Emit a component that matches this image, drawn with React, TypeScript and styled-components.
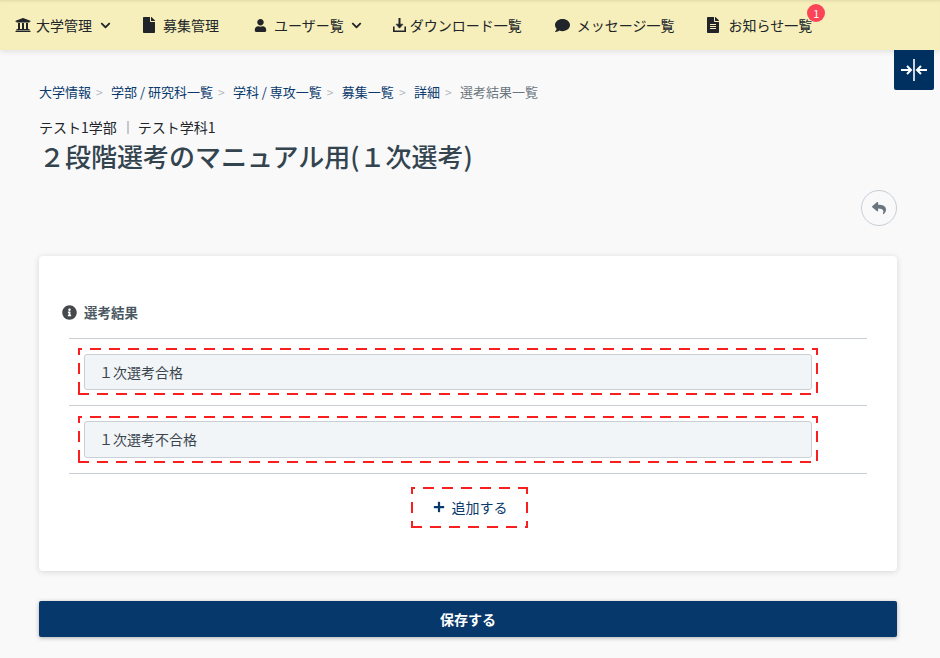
import React from 'react';
import styled, { createGlobalStyle, css } from 'styled-components';
import {
	FaChevronDown,
	FaComment,
	FaFile,
	FaFileAlt,
	FaInfoCircle,
	FaPlus,
	FaReply,
	FaUniversity,
	FaUser,
} from 'react-icons/fa';

const dashRed = '#f91f1f';

// Long dashes, which a plain `border: dashed` can't give.
const dashedOutline = css`
	background-image:
		linear-gradient(90deg, ${dashRed} 11px, transparent 11px),
		linear-gradient(90deg, ${dashRed} 11px, transparent 11px),
		linear-gradient(180deg, ${dashRed} 11px, transparent 11px),
		linear-gradient(180deg, ${dashRed} 11px, transparent 11px);
	background-size: 19px 2px, 19px 2px, 2px 19px, 2px 19px;
	background-position: -7px 0, 0 100%, 0 -4px, 100% -4px;
	background-repeat: repeat-x, repeat-x, repeat-y, repeat-y;
`;

const GlobalStyle = createGlobalStyle`
	html, body {
		margin: 0;
		padding: 0;
		background-color: #f9f9fa;
		font-family: "Noto Sans CJK JP", "Noto Sans", sans-serif;
	}
	* {
		box-sizing: border-box;
	}
`;

const Root = styled.div`
	position: relative;
	width: 940px;
	height: 658px;
	overflow: hidden;
`;

const Navbar = styled.nav`
	height: 50px;
	display: flex;
	align-items: center;
	padding: 0 0 0 15px;
	background-color: #f6efbb;
	box-shadow: 0 1px 6px rgba(0, 0, 0, 0.12), inset 0 3px 3px -2px rgba(0, 0, 0, 0.1);
	color: #212529;
	font-size: 14px;
`;

const NavItem = styled.div<{ $left?: number }>`
	position: relative;
	display: flex;
	align-items: center;
	margin-left: ${props => props.$left ?? 0}px;
	white-space: nowrap;
	svg {
		flex-shrink: 0;
	}
`;

const NavLabel = styled.span<{ $left: number; $right?: number }>`
	margin: 0 ${props => props.$right ?? 0}px 0 ${props => props.$left}px;
`;

const Badge = styled.span`
	position: absolute;
	top: -11px;
	right: -13px;
	width: 18px;
	height: 18px;
	border-radius: 50%;
	background-color: #fb4556;
	color: white;
	font-size: 11px;
	line-height: 18px;
	text-align: center;
`;

const CollapseToggle = styled.div`
	position: absolute;
	top: 50px;
	right: 6px;
	width: 40px;
	height: 40px;
	display: flex;
	align-items: center;
	justify-content: center;
	background-color: #00305f;
	border-radius: 0 0 2px 2px;
`;

const Main = styled.main`
	padding: 33px 43px 0 39px;
`;

const Breadcrumb = styled.div`
	display: flex;
	align-items: center;
	height: 16px;
	font-size: 13px;
	color: #0a3a6c;
`;

const Crumb = styled.span<{ $current?: boolean }>`
	color: ${props => (props.$current ? '#6c757d' : '#0a3a6c')};
`;

const CrumbSeparator = styled.span`
	width: 20px;
	padding-left: 5px;
	font-size: 12px;
	color: #b4bac0;
`;

const SubTitle = styled.div`
	display: flex;
	align-items: center;
	margin-top: 20px;
	height: 16px;
	font-size: 14px;
	color: #212529;
`;

const Divider = styled.span`
	width: 2px;
	height: 13px;
	margin: 0 9px 0 10px;
	background-color: #c4c8cc;
`;

const Title = styled.h1`
	margin: 4px 0 0;
	height: 34px;
	font-size: 26px;
	line-height: 34px;
	font-weight: 500;
	color: #33444f;
	white-space: nowrap;
`;

const ActionRow = styled.div`
	display: flex;
	justify-content: flex-end;
	margin-top: 17px;
`;

const BackButton = styled.div`
	width: 36px;
	height: 36px;
	display: flex;
	align-items: center;
	justify-content: center;
	border: 1px solid #c5ced6;
	border-radius: 50%;
	color: #69757f;
`;

const Card = styled.section`
	margin-top: 30px;
	height: 315px;
	padding: 47px 30px 0 23px;
	background-color: white;
	border-radius: 4px;
	box-shadow: 0 1px 6px rgba(0, 0, 0, 0.14);
`;

const SectionHeader = styled.div`
	display: flex;
	align-items: center;
	gap: 7px;
	height: 18px;
	font-size: 13.5px;
	font-weight: 700;
	color: #4b5863;
	svg {
		color: #45494e;
	}
`;

const ResultList = styled.div`
	margin: 16.9px 0 0 7px;
`;

const ResultRow = styled.div`
	height: 67.4px;
	padding: 9.3px 49px 0 9px;
	border-top: 1px solid #c8ced4;
`;

const DashedBox = styled.div`
	height: 47px;
	padding: 5.8px 6px;
	${dashedOutline}
`;

const ResultInput = styled.div`
	height: 36.2px;
	display: flex;
	align-items: center;
	padding-left: 14px;
	background-color: #f1f5f8;
	border: 1px solid #c8d0d6;
	border-radius: 3px;
	font-size: 14px;
	color: #3a444c;
`;

const AddRow = styled.div`
	display: flex;
	justify-content: center;
	padding: 13px 0 0 3px;
	border-top: 1px solid #c8ced4;
`;

const AddButton = styled.div`
	width: 117px;
	height: 41px;
	display: flex;
	align-items: center;
	justify-content: center;
	gap: 7px;
	padding-left: 1px;
	font-size: 14px;
	color: #0a3a6c;
	${dashedOutline}
`;

const SaveButton = styled.div`
	margin-top: 30px;
	height: 36px;
	display: flex;
	align-items: center;
	justify-content: center;
	background-color: #07386b;
	border-radius: 2px;
	box-shadow: 0 1px 4px rgba(0, 0, 0, 0.3);
	color: white;
	font-size: 14px;
	font-weight: 700;
`;

const DownloadIcon = () => (
	<svg width="13" height="14" viewBox="0 0 13 14" fill="none" stroke="currentColor" strokeWidth="1.6">
		<path d="M.8 8.5v4.7h11.4V8.5" />
		<path d="M6.5 0v8" strokeWidth="2" />
		<path d="M3 6.2h7L6.5 10.2z" fill="currentColor" strokeWidth="0.6" />
	</svg>
);

const CollapseIcon = () => (
	<svg width="28" height="22" viewBox="0 0 28 22" fill="none" stroke="white" strokeWidth="2">
		<path d="M14 0v22" strokeWidth="1.6" />
		<path d="M1 11h9.5M7 7l4 4-4 4" />
		<path d="M27 11h-9.5M21 7l-4 4 4 4" />
	</svg>
);

const crumbs = ['大学情報', '学部 / 研究科一覧', '学科 / 専攻一覧', '募集一覧', '詳細'];
const results = ['１次選考合格', '１次選考不合格'];

const App = () => {
	return (
		<Root>
			<GlobalStyle />
			<Navbar>
				<NavItem>
					<FaUniversity size={16} />
					<NavLabel $left={5} $right={8}>大学管理</NavLabel>
					<FaChevronDown size={11} />
				</NavItem>
				<NavItem $left={30}>
					<FaFile size={16} />
					<NavLabel $left={6}>募集管理</NavLabel>
				</NavItem>
				<NavItem $left={35}>
					<FaUser size={13} />
					<NavLabel $left={7} $right={7}>ユーザー覧</NavLabel>
					<FaChevronDown size={11} />
				</NavItem>
				<NavItem $left={31}>
					<DownloadIcon />
					<NavLabel $left={4}>ダウンロード一覧</NavLabel>
				</NavItem>
				<NavItem $left={33}>
					<FaComment size={15} />
					<NavLabel $left={7}>メッセージ一覧</NavLabel>
				</NavItem>
				<NavItem $left={31}>
					<FaFileAlt size={16} />
					<NavLabel $left={7}>お知らせ一覧</NavLabel>
					<Badge>1</Badge>
				</NavItem>
			</Navbar>
			<CollapseToggle>
				<CollapseIcon />
			</CollapseToggle>
			<Main>
				<Breadcrumb>
					{crumbs.map(crumb => (
						<React.Fragment key={crumb}>
							<Crumb>{crumb}</Crumb>
							<CrumbSeparator>&gt;</CrumbSeparator>
						</React.Fragment>
					))}
					<Crumb $current>選考結果一覧</Crumb>
				</Breadcrumb>
				<SubTitle>
					テスト1学部
					<Divider />
					テスト学科1
				</SubTitle>
				<Title>２段階選考のマニュアル用(１次選考)</Title>
				<ActionRow>
					<BackButton>
						<FaReply size={14} />
					</BackButton>
				</ActionRow>
				<Card>
					<SectionHeader>
						<FaInfoCircle size={15} />
						選考結果
					</SectionHeader>
					<ResultList>
						{results.map(result => (
							<ResultRow key={result}>
								<DashedBox>
									<ResultInput>{result}</ResultInput>
								</DashedBox>
							</ResultRow>
						))}
						<AddRow>
							<AddButton>
								<FaPlus size={12} />
								追加する
							</AddButton>
						</AddRow>
					</ResultList>
				</Card>
				<SaveButton>保存する</SaveButton>
			</Main>
		</Root>
	);
};

export default App;
